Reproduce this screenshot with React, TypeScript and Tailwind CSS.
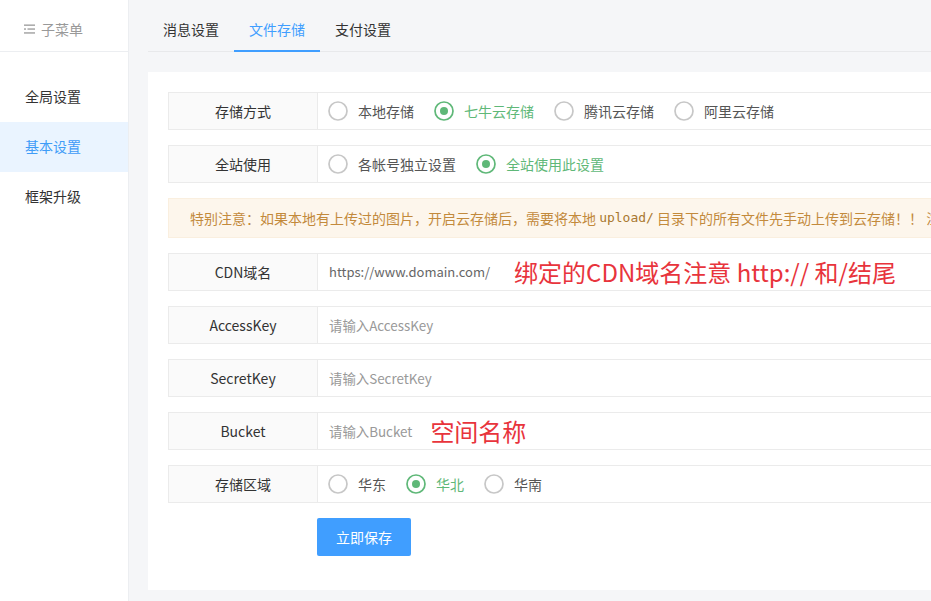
import React from "react";

const FONT = { fontFamily: '"Noto Sans CJK SC", "Noto Sans", sans-serif' };

function Radio({ label, checked }: { label: string; checked?: boolean }) {
  return (
    <div className="flex items-center mr-[20px]">
      <svg width="20" height="20" viewBox="0 0 20 20" className="shrink-0">
        <circle cx="10" cy="10" r="9" fill="white" stroke={checked ? "#5fb878" : "#c7c7c7"} strokeWidth="1.7" />
        {checked && <circle cx="10" cy="10" r="4" fill="#5fb878" />}
      </svg>
      <span className={`ml-[10px] text-[14px] leading-none ${checked ? "text-[#5fb878]" : "text-[#555]"}`}>{label}</span>
    </div>
  );
}

function Row({ label, children }: { label: string; children: React.ReactNode }) {
  return (
    <div className="flex h-[38px] border border-[#ebebeb] mb-[15px]">
      <div className="w-[149px] shrink-0 border-r border-[#ebebeb] bg-[#fafafa] flex items-center justify-center text-[14px] text-[#333]">
        {label}
      </div>
      <div className="flex-1 flex items-center pl-[10px] min-w-0">{children}</div>
    </div>
  );
}

export default function App() {
  return (
    <div className="flex w-[931px] h-[601px] overflow-hidden bg-[#f5f6f8]" style={FONT}>
      <aside className="w-[129px] shrink-0 bg-white border-r border-[#eceef1] flex flex-col">
        <div className="h-[52px] border-b border-[#eceef1] flex items-center pt-[7px] pl-[24px] text-[#999] text-[14px]">
          <svg width="11" height="10" viewBox="0 0 11 10" className="mr-[6px]">
            <rect x="0" y="0.5" width="11" height="1.3" fill="#999" />
            <rect x="0" y="4.4" width="2" height="1.3" fill="#999" />
            <rect x="3.5" y="4.4" width="7.5" height="1.3" fill="#999" />
            <rect x="0" y="8.3" width="11" height="1.3" fill="#999" />
          </svg>
          子菜单
        </div>
        <div className="pt-[20px] flex flex-col text-[14px]">
          <div className="h-[50px] flex items-center pl-[25px] pb-[1px] text-[#333]">全局设置</div>
          <div className="h-[50px] flex items-center pl-[25px] pb-[1px] bg-[#eaf4ff] text-[#3f9cf7]">基本设置</div>
          <div className="h-[50px] flex items-center pl-[25px] pb-[1px] text-[#333]">框架升级</div>
        </div>
      </aside>

      <main className="flex-1 min-w-0 pl-[19px] pt-[9px]">
        <div className="h-[43px] border-b border-[#e8e9eb] flex text-[14px]">
          <div className="h-[43px] px-[15px] flex items-center text-[#333] border-b-2 border-transparent">消息设置</div>
          <div className="h-[43px] px-[15px] flex items-center text-[#409eff] border-b-2 border-[#409eff]">文件存储</div>
          <div className="h-[43px] px-[15px] flex items-center text-[#333] border-b-2 border-transparent">支付设置</div>
        </div>

        <div className="mt-[20px] w-[823px] bg-white pt-[20px] pl-[20px] pr-[20px] pb-[34px]">
          <Row label="存储方式">
            <Radio label="本地存储" />
            <Radio label="七牛云存储" checked />
            <Radio label="腾讯云存储" />
            <Radio label="阿里云存储" />
          </Row>
          <Row label="全站使用">
            <Radio label="各帐号独立设置" />
            <Radio label="全站使用此设置" checked />
          </Row>

          <div className="h-[40px] mb-[15px] bg-[#fdf6ec] border border-[#faefdf] flex items-center pl-[21px] overflow-hidden whitespace-nowrap text-[14px] text-[#c38a3c]">
            特别注意：如果本地有上传过的图片，开启云存储后，需要将本地&nbsp;
            <span className="text-[13px] text-[#a9782f]" style={{ fontFamily: '"DejaVu Sans Mono", "Liberation Mono", monospace' }}>
              upload/
            </span>
            &nbsp;目录下的所有文件先手动上传到云存储！！&nbsp;注
          </div>

          <Row label="CDN域名">
            <span className="text-[13px] text-[#666] ml-[1px]">https://www.domain.com/</span>
            <span className="ml-[24px] text-[24px] leading-none text-[#e8343c]">绑定的CDN域名注意 http:// 和/结尾</span>
          </Row>
          <Row label="AccessKey">
            <span className="text-[13.4px] text-[#999] ml-[1px]">请输入AccessKey</span>
          </Row>
          <Row label="SecretKey">
            <span className="text-[13.4px] text-[#999] ml-[1px]">请输入SecretKey</span>
          </Row>
          <Row label="Bucket">
            <span className="text-[13.4px] text-[#999] ml-[1px]">请输入Bucket</span>
            <span className="ml-[18px] text-[24px] leading-none text-[#e8343c]">空间名称</span>
          </Row>
          <Row label="存储区域">
            <Radio label="华东" />
            <Radio label="华北" checked />
            <Radio label="华南" />
          </Row>

          <div className="pl-[149px]">
            <button className="w-[94px] h-[38px] rounded-[2px] bg-[#409eff] text-white text-[14px]">立即保存</button>
          </div>
        </div>
      </main>
    </div>
  );
}
